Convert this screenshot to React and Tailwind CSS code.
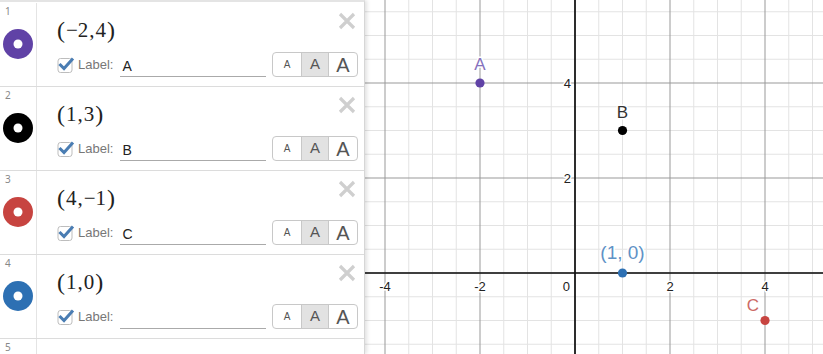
import React from "react";

const rows = [
  { n: 1, color: "#6042a6", tex: ["(", "−2", ",", "4", ")"], label: "A" },
  { n: 2, color: "#000000", tex: ["(", "1", ",", "3", ")"], label: "B" },
  { n: 3, color: "#c74440", tex: ["(", "4", ",", "−1", ")"], label: "C" },
  { n: 4, color: "#2d70b3", tex: ["(", "1", ",", "0", ")"], label: "" },
];

const OX = 210;
const OY = 273;
const U = 47.5;

function Dot({ color }) {
  return (
    <svg width="32" height="32" viewBox="0 0 32 32">
      <circle cx="16" cy="16" r="15" fill={color} />
      <circle cx="16" cy="16" r="4.5" fill="#fff" />
    </svg>
  );
}

function Check() {
  return (
    <svg width="18" height="18" viewBox="0 0 18 18" className="shrink-0">
      <rect x="1" y="2.5" width="14" height="14" rx="2.5" fill="#fff" stroke="#bdbdbd" />
      <path d="M3.5 9 L7 12.5 L15 3.5" fill="none" stroke="#4a7db3" strokeWidth="3" strokeLinecap="square" />
    </svg>
  );
}

function Close() {
  return (
    <svg width="18" height="18" viewBox="0 0 18 18">
      <path d="M2 2 L16 16 M16 2 L2 16" stroke="#cfcfcf" strokeWidth="3.2" />
    </svg>
  );
}

function Row({ row }) {
  return (
    <div className="flex h-[84px] border-b border-[#dcdcdc]">
      <div className="w-[37px] shrink-0 border-r border-[#e4e4e4]">
        <div className="pl-[5px] pt-[2px] text-[10px] text-[#888] leading-[12px]">{row.n}</div>
        <div className="pl-[2px] pt-[11px]">
          <Dot color={row.color} />
        </div>
      </div>
      <div className="flex-1 flex flex-col pl-[20px] pr-[6px]">
        <div className="flex justify-between items-start h-[49px]">
          <div
            className="pt-[12px] text-[21px] leading-[30px] text-[#222] flex items-center"
            style={{ fontFamily: '"Liberation Serif", "DejaVu Serif", serif' }}
          >
            <span className="text-[24px] leading-[28px]">{row.tex[0]}</span>
            <span className="px-[1px]">{row.tex[1]}</span>
            <span>{row.tex[2]}</span>
            <span className="px-[1px]">{row.tex[3]}</span>
            <span className="text-[24px] leading-[28px]">{row.tex[4]}</span>
          </div>
          <div className="pt-[9px] pr-[2px]">
            <Close />
          </div>
        </div>
        <div className="flex items-center" style={{ fontFamily: '"Liberation Sans", Arial, sans-serif' }}>
          <Check />
          <span className="ml-[3px] text-[13px] text-[#777]">Label:</span>
          <div className="ml-[7px] w-[146px] h-[24px] border-b border-[#aaa] text-[14px] text-[#222] pl-[2px] pt-[3px]">
            {row.label}
          </div>
          <div className="ml-auto flex h-[25px] border border-[#c8c8c8] rounded-[4px] overflow-hidden text-[#555]">
            <div className="w-[28px] flex items-center justify-center text-[10px]">A</div>
            <div className="w-[28px] flex items-center justify-center text-[15px] bg-[#e2e2e2] border-x border-[#c8c8c8]">A</div>
            <div className="w-[28px] flex items-center justify-center text-[20px]">A</div>
          </div>
        </div>
      </div>
    </div>
  );
}

function Graph() {
  const vx = [];
  for (let k = -20; k <= 20; k++) {
    const x = OX + k * U / 2;
    if (x >= 0 && x <= 458) vx.push({ x, major: k % 4 === 0 });
  }
  const hy = [];
  for (let k = -20; k <= 20; k++) {
    const y = OY - k * U / 2;
    if (y >= 0 && y <= 354) hy.push({ y, major: k % 4 === 0 });
  }
  const px = (v) => OX + v * U;
  const py = (v) => OY - v * U;
  const halo = { paintOrder: "stroke", stroke: "#fff", strokeWidth: 3, strokeLinejoin: "round" };
  return (
    <svg width="458" height="354" className="block" style={{ fontFamily: '"Liberation Sans", Arial, sans-serif' }}>
      <rect width="458" height="354" fill="#fff" />
      {vx.filter((l) => !l.major).map((l) => (
        <line key={"vm" + l.x} x1={l.x} x2={l.x} y1="0" y2="354" stroke="#e3e3e3" />
      ))}
      {hy.filter((l) => !l.major).map((l) => (
        <line key={"hm" + l.y} x1="0" x2="458" y1={l.y} y2={l.y} stroke="#e3e3e3" />
      ))}
      {vx.filter((l) => l.major).map((l) => (
        <line key={"vM" + l.x} x1={l.x} x2={l.x} y1="0" y2="354" stroke="#999" />
      ))}
      {hy.filter((l) => l.major).map((l) => (
        <line key={"hM" + l.y} x1="0" x2="458" y1={l.y} y2={l.y} stroke="#999" />
      ))}
      <line x1={OX} x2={OX} y1="0" y2="354" stroke="#111" strokeWidth="1.7" />
      <line x1="0" x2="458" y1={OY} y2={OY} stroke="#111" strokeWidth="1.7" />

      {[-4, -2, 2, 4].map((v) => (
        <text key={"xl" + v} x={px(v)} y={OY + 18} fontSize="13" textAnchor="middle" fill="#222" style={halo}>
          {v < 0 ? "-" + Math.abs(v) : v}
        </text>
      ))}
      <text x={OX - 5} y={OY + 18} fontSize="13" textAnchor="end" fill="#222" style={halo}>0</text>
      {[2, 4].map((v) => (
        <text key={"yl" + v} x={OX - 4} y={py(v) + 5} fontSize="13" textAnchor="end" fill="#222" style={halo}>
          {v}
        </text>
      ))}

      <circle cx={px(-2)} cy={py(4)} r="4.6" fill="#6042a6" />
      <text x={px(-2)} y={py(4) - 13} fontSize="17" textAnchor="middle" fill="#8571bd" style={halo}>A</text>

      <circle cx={px(1)} cy={py(3)} r="4.6" fill="#000" />
      <text x={px(1)} y={py(3) - 13} fontSize="17" textAnchor="middle" fill="#333" style={halo}>B</text>

      <circle cx={px(4)} cy={py(-1)} r="4.6" fill="#c74440" />
      <text x={px(4) - 12} y={py(-1) - 10} fontSize="17" textAnchor="middle" fill="#cc6a66" style={halo}>C</text>

      <circle cx={px(1)} cy={py(0)} r="4.6" fill="#2d70b3" />
      <text x={px(1)} y={py(0) - 14} fontSize="19" textAnchor="middle" fill="#5f92c6" style={halo}>(1, 0)</text>
    </svg>
  );
}

export default function App() {
  return (
    <div className="flex w-[823px] h-[354px] overflow-hidden bg-white">
      <div className="relative z-10 w-[365px] shrink-0 h-[354px] overflow-hidden bg-white border-t-2 border-[#e4e4e4] border-r border-r-[#d6d6d6] shadow-[2px_0_4px_rgba(0,0,0,0.12)]">
        <div className="pt-px">
          {rows.map((r) => (
            <Row key={r.n} row={r} />
          ))}
          <div className="flex h-[84px]">
            <div className="w-[37px] shrink-0 border-r border-[#e4e4e4]">
              <div className="pl-[5px] pt-[2px] text-[10px] text-[#888] leading-[12px]">5</div>
            </div>
          </div>
        </div>
      </div>
      <Graph />
    </div>
  );
}
